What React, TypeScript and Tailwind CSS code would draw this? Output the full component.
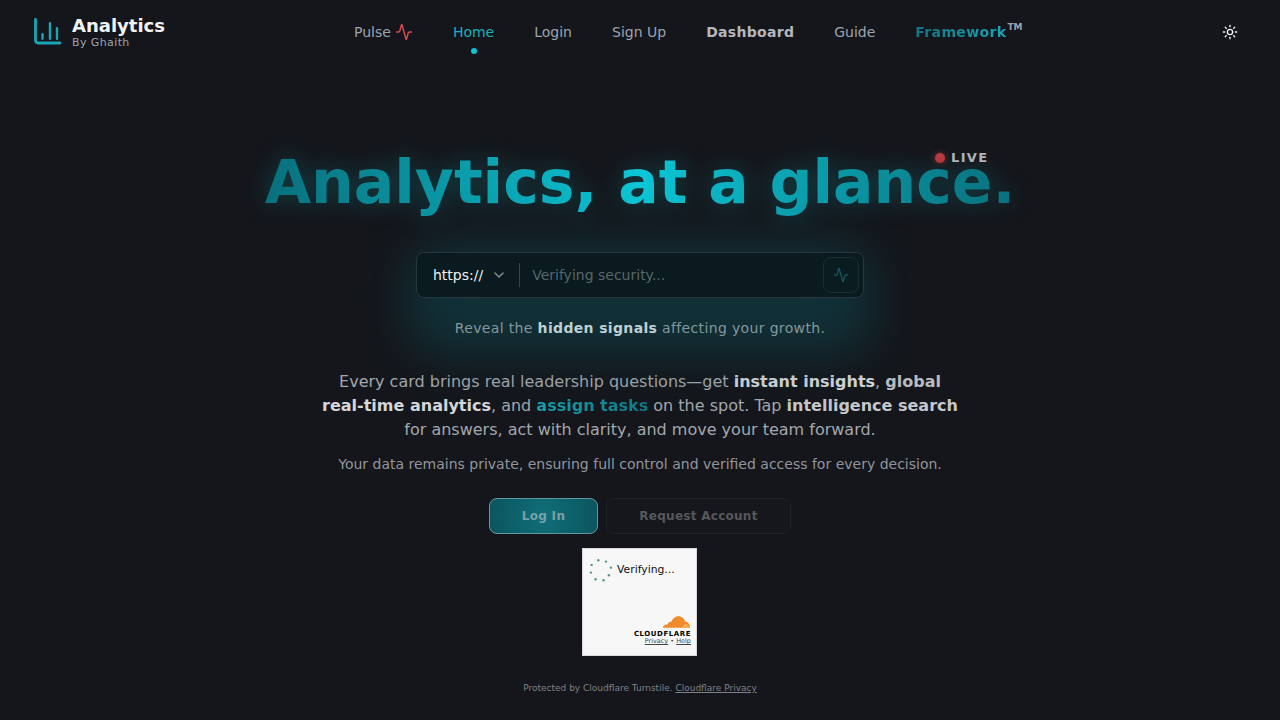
import { Activity, ChevronDown, Sun } from "lucide-react";

const font = { fontFamily: '"DejaVu Sans", sans-serif' };

const spinnerDots = [
  [10.3, 2.3],
  [17.9, 3.6],
  [22.9, 9.6],
  [20.9, 17.3],
  [15.6, 22.3],
  [7.6, 21.3],
  [2.9, 14.6],
  [3.6, 6.9],
];

function Spinner() {
  return (
    <svg width="24" height="24" viewBox="0 0 24 24" className="shrink-0">
      {spinnerDots.map(([x, y]) => (
        <circle key={x} cx={x} cy={y} r="1.200" fill="#4f9a83" />
      ))}
    </svg>
  );
}

function Cloud() {
  return (
    <svg width="29" height="14" viewBox="0 0 30 14">
      <path d="M1 13c0-2 1.500-3.500 3.500-3.500.4 0 .8 0 1.100.1C6.500 7.500 8 6.500 9.500 6.800 11 3 14 1 17 1c3.500 0 6.200 2.500 6.800 5.500 3-.3 5.200 3 5.200 6.500H1z" fill="#f08a2c" />
      <path d="M21 13c.5-2 1-3.500 3-4 2 0 4 1.500 5 4h-8z" fill="#f6ad52" />
    </svg>
  );
}

export default function App() {
  return (
    <div style={font} className="min-h-[720px] h-[720px] overflow-hidden bg-[#14161b] text-white flex flex-col">
      <header className="relative h-16 shrink-0 flex items-center justify-between pl-[33px] pr-[42px]">
        <div className="flex items-center gap-[9px]">
          <svg width="30" height="30" viewBox="0 0 30 30" fill="none" stroke="#1ba6b5" strokeWidth="2.800" strokeLinecap="round" strokeLinejoin="round">
            <path d="M2.500 2.500v21a2.500 2.500 0 0 0 2.500 2.500h22" />
            <path d="M9.500 21.800v-4.600M17 21.800V6.200M24 21.800V11.200" strokeWidth="2.400" />
          </svg>
          <div className="flex flex-col -mt-[2px]">
            <span className="text-[18px] leading-[22px] font-bold text-[#f1f3f5]">Analytics</span>
            <span className="text-[11px] leading-[11px] tracking-[0.4px] text-[#9ca3af]">By Ghaith</span>
          </div>
        </div>
        <nav className="absolute left-[354px] top-0 h-16 flex items-center gap-10 text-[14px] text-[#9ca3af]">
          <span className="flex items-center gap-[4px]">
            Pulse
            <Activity size={18} color="#dc4a4f" strokeWidth={2} />
          </span>
          <span className="relative text-[#17b0bf]">
            Home
            <span className="absolute left-1/2 -translate-x-1/2 top-[26px] w-[6px] h-[6px] rounded-full bg-[#0cc4d4]" />
          </span>
          <span>Login</span>
          <span>Sign Up</span>
          <span className="font-bold tracking-[0.3px] text-[#b4b8be]">Dashboard</span>
          <span>Guide</span>
          <span className="relative font-bold tracking-[0.35px]">
            <span className="bg-gradient-to-r from-[#127480] to-[#18a8b7] bg-clip-text text-transparent">Framework</span>
            <span className="absolute left-full ml-[1px] -top-[1px] text-[9px] tracking-normal font-bold text-[#9ca3af]">TM</span>
          </span>
        </nav>
        <Sun size={16} color="#f1f3f5" strokeWidth={2} />
      </header>

      <main className="flex flex-col items-center">
        <div className="relative mt-[82px]">
          <h1 className="text-[60px] leading-[72px] font-bold whitespace-nowrap bg-gradient-to-r from-[#09707c] via-[#0cc6d6] to-[#09707c] bg-clip-text text-transparent [filter:drop-shadow(0_0_12px_rgba(12,190,210,0.28))]">
            Analytics, at a glance.
          </h1>
          <div className="absolute right-[27px] top-[4px] flex items-center gap-[6px] text-[13px] leading-4 font-bold tracking-[1.300px] text-[#b0b4ba]">
            <span className="w-[10px] h-[10px] rounded-full bg-[#b5393f] shadow-[0_0_6px_rgba(220,60,60,0.5)]" />
            LIVE
          </div>
        </div>

        <div className="relative mt-[34px] flex flex-col items-center w-[448px]">
          <div className="absolute -left-[10px] -right-[10px] -top-[10px] bottom-[-18px] rounded-[40px] bg-[#0e4a53] opacity-50 blur-[24px]" />
          <div className="relative w-[448px] h-[46px] rounded-lg border border-[#24383d] bg-[#0a1a1e] flex items-center pl-4 pr-[4px]">
            <span className="text-[14px] text-[#eef1f2]">https://</span>
            <ChevronDown size={16} color="#8b9599" className="ml-[8px]" />
            <span className="w-px h-[24px] bg-[#33474b] ml-[12px]" />
            <span className="ml-3 text-[14px] text-[#56666b]">Verifying security...</span>
            <span className="ml-auto w-9 h-9 rounded-lg border border-[#17302f] bg-[#0a1c20] flex items-center justify-center">
              <Activity size={16} color="#14555d" strokeWidth={2} />
            </span>
          </div>
          <p className="relative mt-[20px] text-[14px] leading-5 tracking-[0.35px] text-[#84979c] whitespace-nowrap">
            Reveal the <strong className="font-bold text-[#bdd0d3]">hidden signals</strong> affecting your growth.
          </p>
        </div>

        <p className="mt-[32px] w-[660px] text-center text-[16px] leading-6 text-[#a3a7ad]">
          Every card brings real leadership questions—get <strong className="font-bold text-[#d4d6d9]">instant insights</strong>, <strong className="font-bold text-[#b8bbc0]">global</strong>
          <br />
          <strong className="font-bold text-[#d4d6d9]">real-time analytics</strong>, and <strong className="font-bold bg-gradient-to-r from-[#17a0af] to-[#0f7a85] bg-clip-text text-transparent">assign tasks</strong> on the spot. Tap <strong className="font-bold text-[#c4c7cb]">intelligence search</strong>
          <br />
          for answers, act with clarity, and move your team forward.
        </p>
        <p className="mt-[12px] text-[14px] leading-5 text-[#92959b]">
          Your data remains private, ensuring full control and verified access for every decision.
        </p>

        <div className="mt-[24px] flex gap-2">
          <button className="w-[109px] h-9 rounded-lg border border-[#5c9aa0] bg-[radial-gradient(circle,#0f6f7a,#0c545d)] text-[12px] font-bold tracking-[0.3px] text-[#79a0a6]">
            Log In
          </button>
          <button className="w-[185px] h-9 rounded-lg border border-[#1f2126] bg-[#15171c] text-[12px] font-bold tracking-[0.27px] text-[#56585d]">
            Request Account
          </button>
        </div>

        <div className="mt-[14px] -ml-px w-[115px] h-[108px] border border-[#d9d9d9] bg-[#f7f7f7] flex flex-col text-[#111]">
          <div className="flex items-center gap-[5px] pl-[5px] pt-[9px]">
            <Spinner />
            <span className="text-[10.800px] leading-[14px]">Verifying...</span>
          </div>
          <div className="mt-auto flex flex-col items-end pr-[5px] pb-[9px]">
            <Cloud />
            <span className="text-[7px] leading-[9px] font-bold tracking-[0.55px] text-black mt-[1px]">CLOUDFLARE</span>
            <span className="text-[6.500px] leading-[9px] -mt-[2px] text-[#444]">
              <span className="underline">Privacy</span> • <span className="underline">Help</span>
            </span>
          </div>
        </div>

        <p className="mt-[26px] text-[9px] leading-3 text-[#7e8186]">
          Protected by Cloudflare Turnstile. <span className="underline">Cloudflare Privacy</span>
        </p>
      </main>
    </div>
  );
}
